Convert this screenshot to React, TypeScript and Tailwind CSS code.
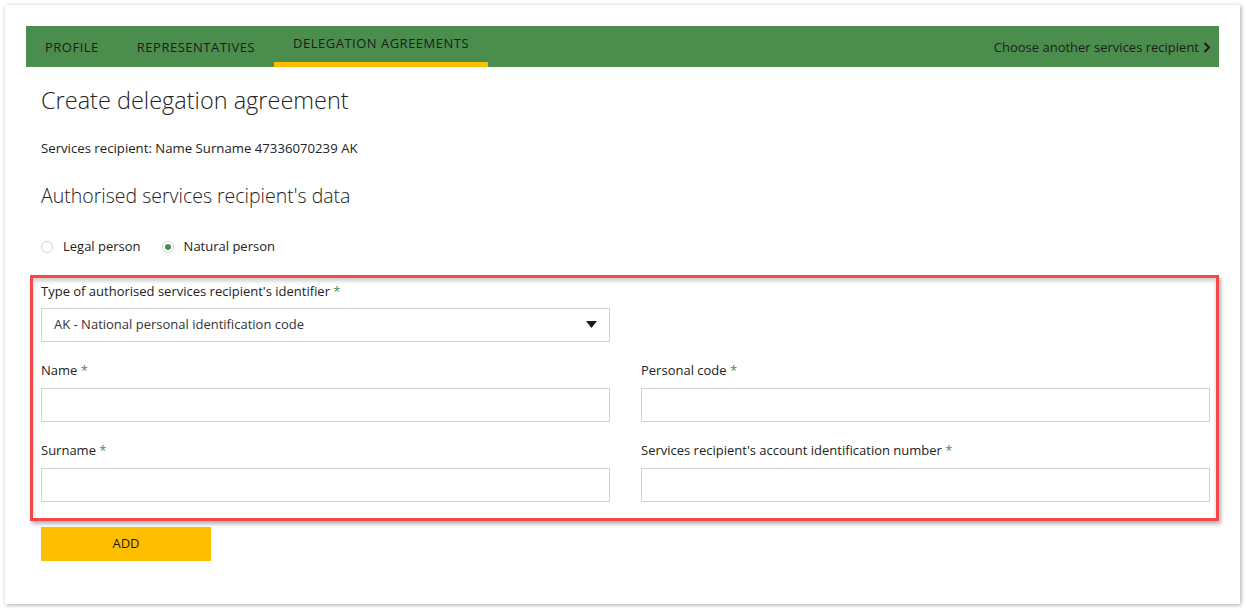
import React from 'react';

const FONT = { fontFamily: '"Open Sans", "Noto Sans", sans-serif' };

const Req = () => <span className="text-[#4b8d4d]"> *</span>;

const Field = ({ label }: { label: string }) => (
  <div className="flex flex-col">
    <label className="text-[13px] leading-[18px] text-[#222] h-[18px] mb-[9px]">
      {label}
      <Req />
    </label>
    <input className="h-[34px] border border-[#ccd3da] bg-white outline-none" />
  </div>
);

const Radio = ({ label, checked }: { label: string; checked?: boolean }) => (
  <label className="flex items-center gap-[10px] text-[13px] text-[#222]">
    <span className="w-[12px] h-[12px] rounded-full border border-[#d4d4d4] bg-white flex items-center justify-center">
      {checked && <span className="w-[6px] h-[6px] rounded-full bg-[#4b8d4d]" />}
    </span>
    {label}
  </label>
);

const App: React.FC = () => {
  return (
    <div className="w-[1246px] h-[610px] bg-white pt-[5px] pl-[5px]" style={FONT}>
      <div className="w-[1235px] h-[599px] bg-white shadow-[1px_1px_4px_rgba(0,0,0,0.35)] pt-[21px] px-[21px]">
        {/* Nav */}
        <div className="h-[41px] bg-[#4b8d4d] flex items-stretch text-[13px] text-[#1c1c1c]">
          <div className="px-[19px] flex items-center pt-[2px] tracking-[0.5px]">PROFILE</div>
          <div className="px-[19px] flex items-center pt-[2px] tracking-[0.5px]">REPRESENTATIVES</div>
          <div className="px-[19px] flex items-center border-b-[5px] border-[#fdc000] tracking-[0.5px]">
            DELEGATION AGREEMENTS
          </div>
          <div className="ml-auto pr-[8px] flex items-center gap-[4px] pt-[2px]">
            Choose another services recipient
            <svg width="8" height="11" viewBox="0 0 8 11">
              <path d="M1.5 1 L6 5.5 L1.5 10" stroke="#1c1c1c" strokeWidth="2" fill="none" />
            </svg>
          </div>
        </div>

        {/* Content */}
        <div className="pl-[15px] pr-[10px]">
          <h1 className="text-[23.5px] leading-[30px] font-light text-[#222] mt-[18px]">Create delegation agreement</h1>
          <p className="text-[13.2px] leading-[18px] text-[#222] mt-[24px]">
            Services recipient: Name Surname 47336070239 AK
          </p>
          <h2 className="text-[19.5px] leading-[28px] font-light text-[#222] mt-[25px]">
            Authorised services recipient's data
          </h2>
          <div className="flex items-center gap-[21px] mt-[27px]">
            <Radio label="Legal person" />
            <Radio label="Natural person" checked />
          </div>
        </div>

        <div
          className="ml-[4px] w-[1189px] mt-[18px] border-[3px] border-[#f4474a] pl-[8px] pr-[6px] pt-[4px] pb-[16px] shadow-[2px_3px_4px_rgba(0,0,0,0.3),inset_0_3px_4px_rgba(0,0,0,0.2)]"
        >
          <div className="flex flex-col w-[569px]">
            <label className="text-[13px] leading-[18px] text-[#222] h-[18px] mb-[8px]">
              Type of authorised services recipient's identifier
              <Req />
            </label>
            <div className="h-[34px] border border-[#ccd3da] flex items-center justify-between pl-[12px] pr-[12px] text-[13px] text-[#333]">
              <span>AK - National personal identification code</span>
              <svg width="11" height="7" viewBox="0 0 11 7">
                <path d="M0 0 H11 L5.5 7 Z" fill="#1c1c1c" />
              </svg>
            </div>
          </div>
          <div className="grid grid-cols-2 gap-x-[31px] gap-y-[19px] mt-[19px]">
            <Field label="Name" />
            <Field label="Personal code" />
            <Field label="Surname" />
            <Field label="Services recipient's account identification number" />
          </div>
        </div>

        <div className="pl-[15px] mt-[6px]">
          <button className="w-[170px] h-[34px] bg-[#fdbf00] text-[13px] text-[#1c1c1c]">ADD</button>
        </div>
      </div>
    </div>
  );
};

export default App;
